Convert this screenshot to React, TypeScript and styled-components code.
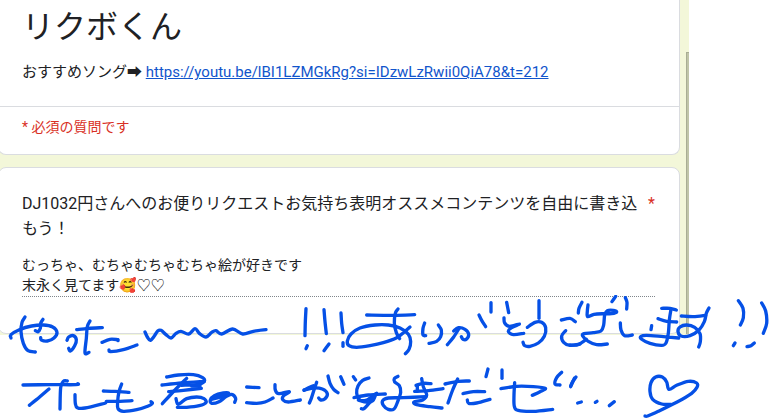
import React from "react";
import styled, { createGlobalStyle } from "styled-components";

const GlobalStyle = createGlobalStyle`
  * { box-sizing: border-box; }
  body {
    margin: 0;
    background: #ffffff;
    color: #202124;
    font-family: Roboto, "Noto Sans CJK JP", "Noto Color Emoji", sans-serif;
  }
`;

const Canvas = styled.div`
  position: relative;
  min-height: 100vh;
  overflow: hidden;
`;

const FormPage = styled.main`
  display: flex;
  gap: 6px;
  margin-right: 81px;
  padding-bottom: 1px;
  background: #f3f7d9;
`;

const Cards = styled.div`
  flex: 1;
  min-width: 0;
  display: flex;
  flex-direction: column;
  gap: 12px;
  margin-left: -2px;
`;

const Card = styled.section<{ $openTop?: boolean }>`
  background: #ffffff;
  border: 1px solid #dadce0;
  border-radius: ${(p) => (p.$openTop ? "0 0 8px 8px" : "8px")};
  border-top-width: ${(p) => (p.$openTop ? "0" : "1px")};
`;

const Intro = styled.header`
  padding: 5px 24px 23px 23px;
  border-bottom: 1px solid #dadce0;
`;

const Title = styled.h1`
  margin: 0;
  font-size: 32px;
  font-weight: 400;
  line-height: 44px;
`;

const Description = styled.p`
  margin: 12px 0 0;
  font-size: 15px;
  line-height: 22px;
  white-space: nowrap;
`;

const SongLink = styled.a`
  color: #1155cc;
  text-decoration: underline;
`;

const RequiredNote = styled.p`
  margin: 0;
  padding: 10px 23px 17px;
  color: #d93025;
  font-size: 14px;
  line-height: 20px;
`;

const Question = styled(Card)`
  padding: 23px 24px 36px 23px;
`;

const QuestionLabel = styled.label`
  display: flex;
  gap: 8px;
  margin-bottom: 14px;
  font-size: 16px;
  line-height: 25px;
`;

const QuestionText = styled.span`
  flex: 1;
  word-break: break-all;
`;

const Star = styled.span`
  color: #d93025;
`;

const Answer = styled.textarea`
  display: block;
  width: 100%;
  height: 42px;
  padding: 0;
  border: 0;
  border-bottom: 1px dotted #80868b;
  background: transparent;
  color: inherit;
  font: inherit;
  font-size: 14px;
  line-height: 20px;
  resize: none;
  overflow: hidden;
  outline: none;
`;

const ScrollThumb = styled.div`
  width: 3px;
  margin-top: 52px;
  background: #c0c5a8;
  border-left: 1px solid #a9ad94;
  border-top: 1px solid #a9ad94;
`;

const Ink = styled.svg`
  position: absolute;
  top: 295px;
  left: 0;
  width: 770px;
  height: 123px;
  pointer-events: none;
`;

/* Pen strokes, three units per pixel; each string is one stroke's points. */
const handwriting: { x: number; strokes: string[] }[] = [
  {
    x: 0,
    strokes: [
      "33,129 33,119 58,104 95,93 130,90 158,96 171,112 162,129 142,138 124,135 122,128",
      "75,66 66,82 63,110 70,145 84,167 106,171",
      "129,73 122,85 121,100 114,110 106,107",
      "201,136 206,126 220,122 229,134 224,152 211,168 206,160",
      "230,104 265,100 307,98",
      "270,78 262,95 259,130 255,174 267,172",
      "306,142 330,133 353,134",
      "354,134 354,137",
      "327,165 332,170 370,164 411,150",
      "435,111 442,126 451,136 463,123 473,108 483,106 497,118 513,129 528,115 543,109 566,117 585,101 598,115 618,126 635,112 648,107 665,117 698,102 728,117 760,109 798,104",
      "69,270 150,269 228,269 233,266",
      "202,258 190,259 182,278 180,342",
      "147,282 118,307 88,331",
      "225,299 226,325 232,338 255,339 317,324",
      "310,288 345,289 387,292",
      "319,319 360,319 396,317",
      "365,267 357,290 353,320 354,341 370,349 410,344 445,333 457,325 453,320",
      "500,246 535,240 580,239 608,248 613,259 595,268 545,271",
      "486,270 545,264 613,259",
      "506,290 550,286 604,280",
      "575,273 600,273",
      "560,250 525,285 487,326",
      "528,311 532,326 540,325 560,311 590,306 612,311 618,323 598,332 560,337 532,337",
    ],
  },
  {
    x: 570,
    strokes: [
      "64,313 82,309 108,300 116,294 100,294 73,302 61,315 65,325 87,320 108,305 125,298 137,310 134,322",
      "170,276 207,278",
      "170,323 200,325 225,321 249,309",
      "255,269 256,285 266,296 298,290 280,303 279,315 295,321 331,315",
      "342,285 370,279 397,282 412,296 405,311 392,315 386,309",
      "380,262 372,285 364,310 358,324",
      "342,286 350,281 370,272",
      "414,243 420,265 431,283 444,293",
      "452,245 462,268",
      "348,41 346,80 345,122",
      "352,152 348,161",
      "402,44 405,80 409,116",
      "417,147 402,167",
      "453,54 455,85 459,113",
      "459,143 459,154",
      "530,60 610,61 674,59",
      "490,245 497,255",
      "537,249 518,256 504,273 500,294 510,315 530,315 545,306 560,295",
      "492,308 535,300 586,297",
      "505,315 535,321 556,297 550,315 540,322 522,341 514,341",
    ],
  },
  {
    x: 1140,
    strokes: [
      "54,42 46,55 43,85 49,113 59,131",
      "90,96 75,109 50,128 10,143 -30,152 -70,157 -93,152 -98,138 -87,117 -60,99 -15,90 25,90 60,99 85,118 92,140 87,163 76,176",
      "134,84 129,100 129,120 137,122",
      "175,90 184,105 182,125 170,139 147,145",
      "202,149 221,126 238,99",
      "221,108 235,98 255,103 266,118 259,133 249,133 244,125",
      "297,60 305,76 317,95",
      "333,23 333,51",
      "380,22 386,53",
      "372,69 374,84 389,94 418,87 395,98 385,109 400,119 431,115",
      "477,17 477,70",
      "442,97 465,82 485,82 497,98 493,124 475,144 450,154 434,152 429,142",
      "544,75 570,70 586,80",
      "557,107 545,123 551,142 570,151 600,147",
      "54,244 43,251 44,261 58,272 62,292 53,320 42,342 25,343 10,331 8,317 25,309 70,308 138,305",
      "108,271 130,265 153,266",
      "104,289 145,287 189,281",
      "125,251 130,275 140,300 128,315 102,321 110,329 150,335 186,339",
      "112,272 112,287",
      "195,267 235,259 268,258",
      "233,252 218,285 204,324",
      "249,296 280,290 314,290",
      "262,315 266,325 290,324 330,313",
      "324,222 318,245",
      "366,225 366,250",
      "363,281 410,274 460,275 496,280 480,290 457,301",
      "404,263 402,300 403,334 415,346 460,349 518,343",
      "545,232 530,248 525,267 540,270",
      "583,250 572,275",
    ],
  },
  {
    x: 1710,
    strokes: [
      "36,22 27,40 25,54",
      "54,30 52,48 53,65 72,58 100,56 125,56 140,51 130,46 112,47 104,60 101,90 93,108 70,113 42,116 38,123 55,139 80,149 112,147",
      "0,150 20,150 35,143 49,133",
      "137,4 126,20",
      "166,8 171,22 170,42",
      "151,84 153,105 164,122 187,120",
      "245,92 243,104",
      "275,40 300,40 319,45",
      "264,71 290,79 320,81",
      "303,43 298,75 295,115 288,144 275,151 240,145 214,132 213,124 230,121 280,125 326,129",
      "334,63 370,65 407,61",
      "417,39 409,55 403,80 387,105 360,122 333,123 324,109 330,96 350,90 374,97 390,116 391,140 386,156",
      "505,17 519,40 520,68 511,90",
      "575,24 587,48 590,85 580,115",
      "495,144 490,152",
      "553,144 543,152 531,155",
      "18,246 8,260 2,273",
      "34,321 23,324",
      "81,319 76,322",
      "133,320 118,332",
      "303,328 275,327 248,313 240,290 243,263 257,246 277,246 290,261 297,283 320,271 355,259 380,264 381,277 365,295 320,322 265,349 233,363 225,363",
    ],
  },
];

/* Turns a point list into a smooth Catmull-Rom curve. */
function smooth(stroke: string): string {
  const p = stroke.split(" ").map((s) => s.split(",").map(Number));
  let d = `M${p[0][0]} ${p[0][1]}`;
  for (let i = 0; i < p.length - 1; i++) {
    const a = p[i - 1] ?? p[i];
    const b = p[i];
    const c = p[i + 1];
    const e = p[i + 2] ?? c;
    d += `C${b[0] + (c[0] - a[0]) / 6} ${b[1] + (c[1] - a[1]) / 6} ${c[0] - (e[0] - b[0]) / 6} ${c[1] - (e[1] - b[1]) / 6} ${c[0]} ${c[1]}`;
  }
  return d;
}

const song = "https://youtu.be/lBI1LZMGkRg?si=IDzwLzRwii0QiA78&t=212";

export default function App() {
  return (
    <Canvas>
      <GlobalStyle />
      <FormPage>
        <Cards>
          <Card $openTop>
            <Intro>
              <Title>リクボくん</Title>
              <Description>
                おすすめソング➡ <SongLink href={song}>{song}</SongLink>
              </Description>
            </Intro>
            <RequiredNote>* 必須の質問です</RequiredNote>
          </Card>
          <Question>
            <QuestionLabel htmlFor="message">
              <QuestionText>
                DJ1032円さんへのお便りリクエストお気持ち表明オススメコンテンツを自由に書き込もう！
              </QuestionText>
              <Star>*</Star>
            </QuestionLabel>
            <Answer
              id="message"
              readOnly
              rows={2}
              value={"むっちゃ、むちゃむちゃむちゃ絵が好きです\n末永く見てます🥰♡♡"}
            />
          </Question>
        </Cards>
        <ScrollThumb />
      </FormPage>
      <Ink viewBox="0 0 2310 369" fill="none" stroke="#0550e6" strokeWidth="10" strokeLinecap="round" strokeLinejoin="round" aria-hidden="true">
        {handwriting.map((part) => (
          <g key={part.x} transform={`translate(${part.x} 0)`}>
            {part.strokes.map((s) => (
              <path key={s} d={smooth(s)} />
            ))}
          </g>
        ))}
      </Ink>
    </Canvas>
  );
}
